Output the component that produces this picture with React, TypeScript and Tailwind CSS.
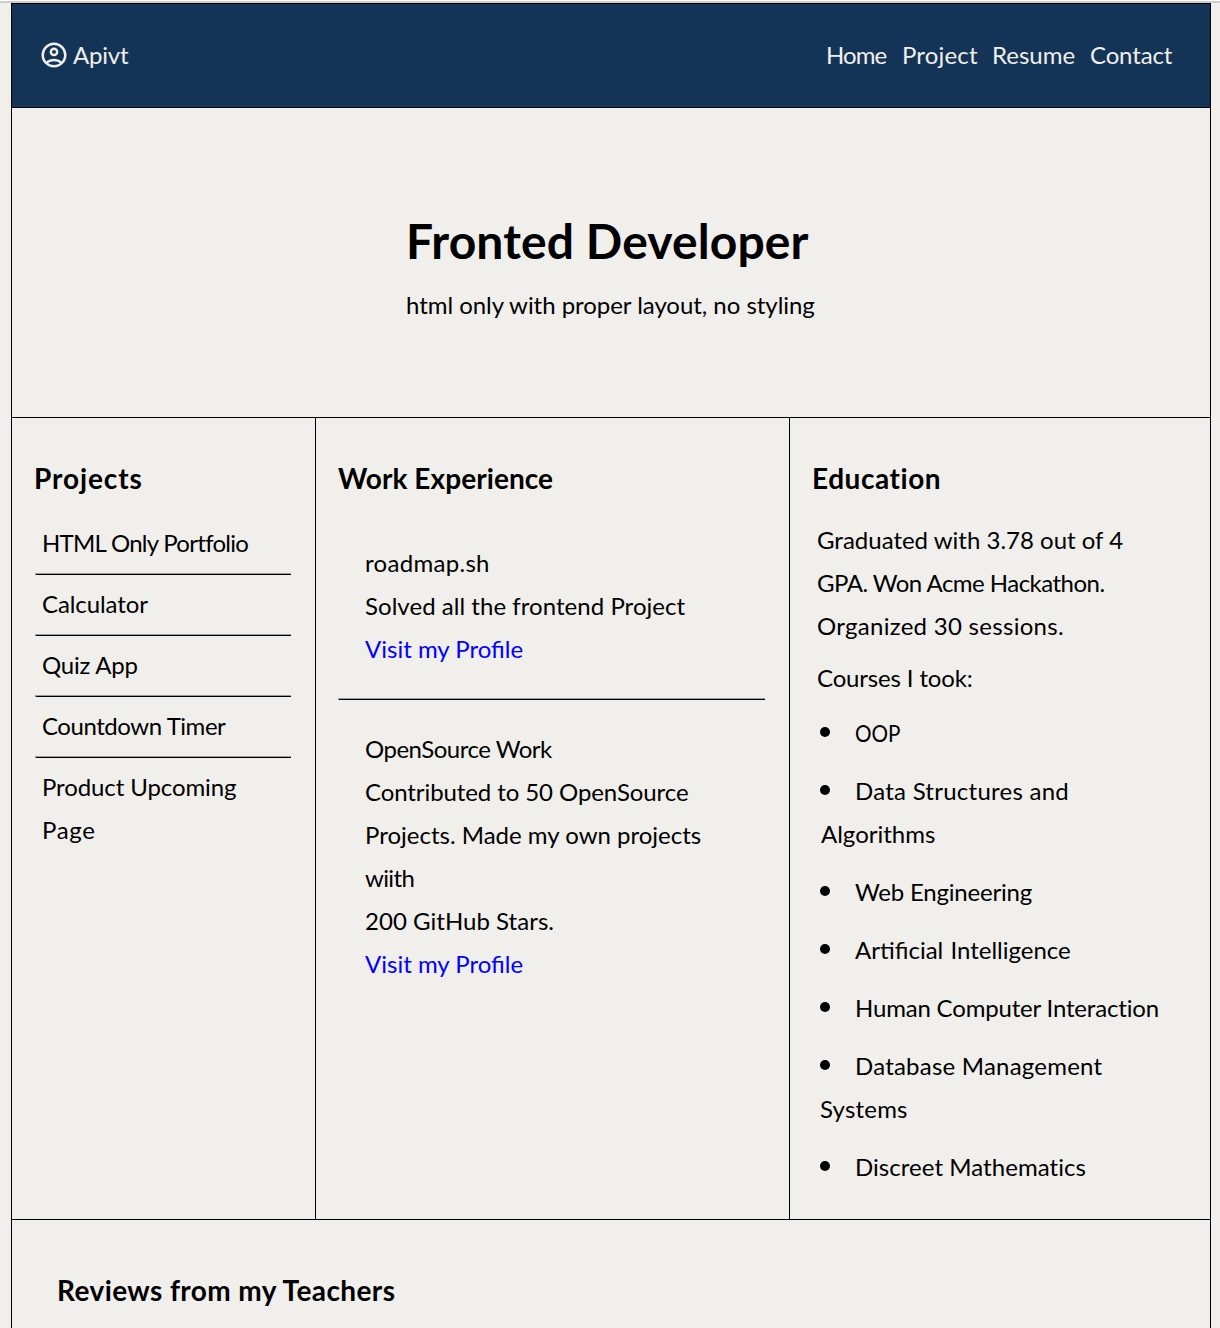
import React from "react";

const AccountIcon = () => (
  <svg viewBox="0 -960 960 960" fill="currentColor" className="mb-px size-[30px]">
    <path d="M234-276q51-39 114-61.5T480-360q69 0 132 22.5T726-276q35-41 54.5-93T800-480q0-133-93.5-226.5T480-800q-133 0-226.5 93.5T160-480q0 59 19.5 111t54.5 93Zm246-164q-59 0-99.5-40.5T340-580q0-59 40.5-99.5T480-720q59 0 99.5 40.5T620-580q0 59-40.5 99.5T480-440Zm0 360q-83 0-156-31.5T197-197q-54-54-85.5-127T80-480q0-83 31.5-156T197-763q54-54 127-85.5T480-880q83 0 156 31.5T763-763q54 54 85.5 127T880-480q0 83-31.5 156T763-197q-54 54-127 85.5T480-80Zm0-80q53 0 100-15.5t86-44.5q-39-29-86-44.5T480-280q-53 0-100 15.5T294-220q39 29 86 44.5T480-160Zm0-360q26 0 43-17t17-43q0-26-17-43t-43-17q-26 0-43 17t-17 43q0 26 17 43t43 17Z" />
  </svg>
);

const Rule = () => (
  <div className="h-[2px] border-t border-l border-t-[#9a9a98] border-l-[#9a9a98] bg-black" />
);

const projects = [
  { name: "HTML Only Portfolio", cls: "-tracking-[0.72px] pl-[7px]" },
  { name: "Calculator", cls: "-tracking-[0.1px] pl-[7px]" },
  { name: "Quiz App", cls: "-tracking-[0.2px] pl-[7px]" },
  { name: "Countdown Timer", cls: "-tracking-[0.45px] pl-[7px]" },
];

const courses = [
  { lines: ["OOP"], cls: ["inline-block origin-left scale-x-[0.86]"] },
  { lines: ["Data Structures and", "Algorithms"], cls: ["tracking-[0.25px]", "tracking-normal pl-px"] },
  { lines: ["Web Engineering"], cls: ["-tracking-[0.2px]"] },
  { lines: ["Artificial Intelligence"], cls: ["tracking-normal [word-spacing:1px]"] },
  { lines: ["Human Computer Interaction"], cls: ["-tracking-[0.18px]"] },
  { lines: ["Database Management", "Systems"], cls: ["tracking-[0.22px]", "tracking-[0.2px]"] },
  { lines: ["Discreet Mathematics"], cls: ["tracking-[0.05px]"] },
];

export default function App() {
  return (
    <div className="h-[1328px] overflow-hidden whitespace-nowrap bg-[#f0efeb] font-['Lato',sans-serif] text-[24px] leading-[43px] text-black">
      <div className="h-[3px] border-t border-t-white bg-[#cccecb]" />
      <div className="ml-[11px] h-[1400px] w-[1200px] border border-black">
        <header className="flex h-[104px] items-center border-b border-black bg-[#133457] pl-[27px] text-[#f0efeb]">
          <AccountIcon />
          <span className="mb-[2px] ml-[4px] -tracking-[0.2px]">Apivt</span>
          <nav className="mb-[2px] ml-auto grid grid-cols-[75px_91px_98px_120px]">
            <a className="-tracking-[0.93px]">Home</a>
            <a className="pl-px tracking-[0.18px]">Project</a>
            <a>Resume</a>
            <a className="-tracking-[0.15px]">Contact</a>
          </nav>
        </header>

        <section className="h-[310px] border-b border-black pl-[394px] pt-[90px]">
          <h1 className="text-[48px] font-bold leading-[86px] tracking-[0.11px]">Fronted Developer</h1>
          <p className="-mt-px">
            <span className="-tracking-[0.04px]">html only with proper layout, no styling</span>
          </p>
        </section>

        <main className="grid h-[802px] grid-cols-[304px_474px_1fr] border-b border-black">
          <section className="border-r border-black pl-[23px] pr-[24px] pt-[35px]">
            <h2 className="mb-[18px] -ml-[1px] text-[28px] font-bold leading-[50px] tracking-[0.9px]">Projects</h2>
            {projects.map((p) => (
              <React.Fragment key={p.name}>
                <p className={p.cls}>{p.name}</p>
                <div className="mb-[7px] mt-[9px]"><Rule /></div>
              </React.Fragment>
            ))}
            <div className="pl-[7px]">
              <p className="-tracking-[0.1px]">Product Upcoming</p>
              <p className="tracking-[0.7px]">Page</p>
            </div>
          </section>

          <section className="border-r border-black pl-[22px] pr-[24px] pt-[35px]">
            <h2 className="text-[28px] font-bold leading-[50px] tracking-[0.07px]">Work Experience</h2>
            <div className="pb-[28px] pl-[27px] pt-[38px]">
              <p className="tracking-[0.3px]">roadmap.sh</p>
              <p className="tracking-[0.04px]">Solved all the frontend Project</p>
              <p className="text-[#0000ff]">Visit my Profile</p>
            </div>
            <Rule />
            <div className="pl-[27px] pt-[27px]">
              <p className="-tracking-[0.5px]">OpenSource Work</p>
              <p className="-tracking-[0.09px]">Contributed to 50 OpenSource</p>
              <p>Projects. Made my own projects</p>
              <p className="-tracking-[0.62px]">wiith</p>
              <p className="tracking-[0.03px]">200 GitHub Stars.</p>
              <p className="text-[#0000ff]">Visit my Profile</p>
            </div>
          </section>

          <section className="pl-[22px] pt-[35px]">
            <h2 className="mb-[15px] text-[28px] font-bold leading-[50px] tracking-[0.55px]">Education</h2>
            <div className="pl-[5px]">
              <p>Graduated with 3.78 out of 4</p>
              <p className="-tracking-[0.53px]">GPA. Won Acme Hackathon.</p>
              <p className="tracking-[0.29px]">Organized 30 sessions.</p>
              <p className="mt-[9px] -tracking-[0.15px]">Courses I took:</p>
            </div>
            <ul className="mt-[12px] flex flex-col gap-[15px] pl-[8px]">
              {courses.map((c) => (
                <li key={c.lines[0]}>
                  <div className="flex items-center">
                    <span className="mb-px mr-[25px] size-[10px] rounded-full bg-black" />
                    <span className={c.cls[0]}>{c.lines[0]}</span>
                  </div>
                  {c.lines[1] && <div className={c.cls[1]}>{c.lines[1]}</div>}
                </li>
              ))}
            </ul>
          </section>
        </main>

        <section className="pl-[45px] pt-[45px]">
          <h2 className="text-[28px] font-bold leading-[50px] tracking-[0.4px]">Reviews from my Teachers</h2>
        </section>
      </div>
    </div>
  );
}
